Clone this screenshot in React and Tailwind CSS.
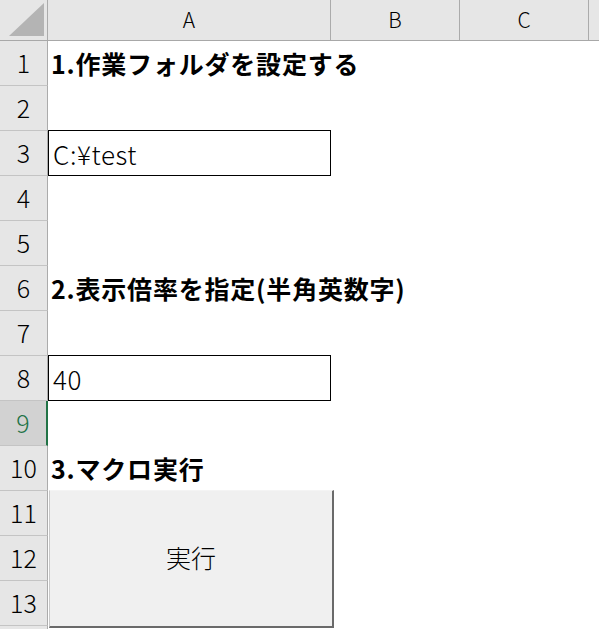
import React from "react";

const font = { fontFamily: '"Noto Sans CJK JP", "Noto Sans", sans-serif' };

function RowHead({ n, selected }) {
  return (
    <div
      className={
        "w-[48px] h-[45px] shrink-0 flex items-center justify-center border-b border-[#c4c4c4] text-[25px] font-light " +
        (selected
          ? "bg-[#d2d2d2] text-[#217346] border-r-2 border-r-[#217346]"
          : "bg-[#e6e6e6] text-black border-r border-r-[#ababab]")
      }
    >
      {n}
    </div>
  );
}

function Row({ n, selected, children }) {
  return (
    <div className="flex h-[45px]">
      <RowHead n={n} selected={selected} />
      <div className="flex-1 flex items-center">{children}</div>
    </div>
  );
}

function Label({ children }) {
  return (
    <div className="pl-[3px] text-[25px] font-bold tracking-[0.8px] text-black whitespace-nowrap">
      {children}
    </div>
  );
}

function BoxRow({ n, value }) {
  return (
    <div className="flex h-[45px]">
      <RowHead n={n} />
      <div className="self-start -mt-px w-[283px] h-[46px] border border-black flex items-center pl-[4px] text-[26px] font-light tracking-[0.6px] text-black">
        {value}
      </div>
    </div>
  );
}

export default function App() {
  return (
    <div className="w-[599px] h-[629px] overflow-hidden bg-white" style={font}>
      {/* column headers */}
      <div className="flex h-[41px] bg-[#e6e6e6] border-b border-[#a8a8a8]">
        <div className="w-[48px] shrink-0 border-r border-[#ababab] flex items-start">
          <svg width="47" height="40" viewBox="0 0 47 40">
            <polygon points="9,36 44,36 44,3" fill="#b4b4b4" />
          </svg>
        </div>
        <div className="w-[283px] shrink-0 border-r border-[#ababab] flex items-center justify-center text-[21px] font-light text-black">
          A
        </div>
        <div className="w-[129px] shrink-0 border-r border-[#ababab] flex items-center justify-center text-[21px] font-light text-black">
          B
        </div>
        <div className="w-[129px] shrink-0 border-r border-[#ababab] flex items-center justify-center text-[21px] font-light text-black">
          C
        </div>
        <div className="flex-1" />
      </div>

      <Row n={1}>
        <Label>1.作業フォルダを設定する</Label>
      </Row>
      <Row n={2} />
      <BoxRow n={3} value="C:¥test" />
      <Row n={4} />
      <Row n={5} />
      <Row n={6}>
        <Label>2.表示倍率を指定(半角英数字)</Label>
      </Row>
      <Row n={7} />
      <BoxRow n={8} value="40" />
      <Row n={9} selected />
      <Row n={10}>
        <Label>3.マクロ実行</Label>
      </Row>

      <div className="flex">
        <div className="flex flex-col">
          <RowHead n={11} />
          <RowHead n={12} />
          <RowHead n={13} />
          <RowHead n="" />
        </div>
        <div className="self-start -mt-px ml-px w-[285px] h-[138px] bg-[#f0f0f0] border-l border-l-[#c8c8c8] border-t border-t-[#f4f4f4] border-r-2 border-r-[#6a6a6a] border-b-2 border-b-[#6a6a6a] flex items-center justify-center pb-[2px] text-[25px] font-light text-black">
          実行
        </div>
      </div>
    </div>
  );
}
